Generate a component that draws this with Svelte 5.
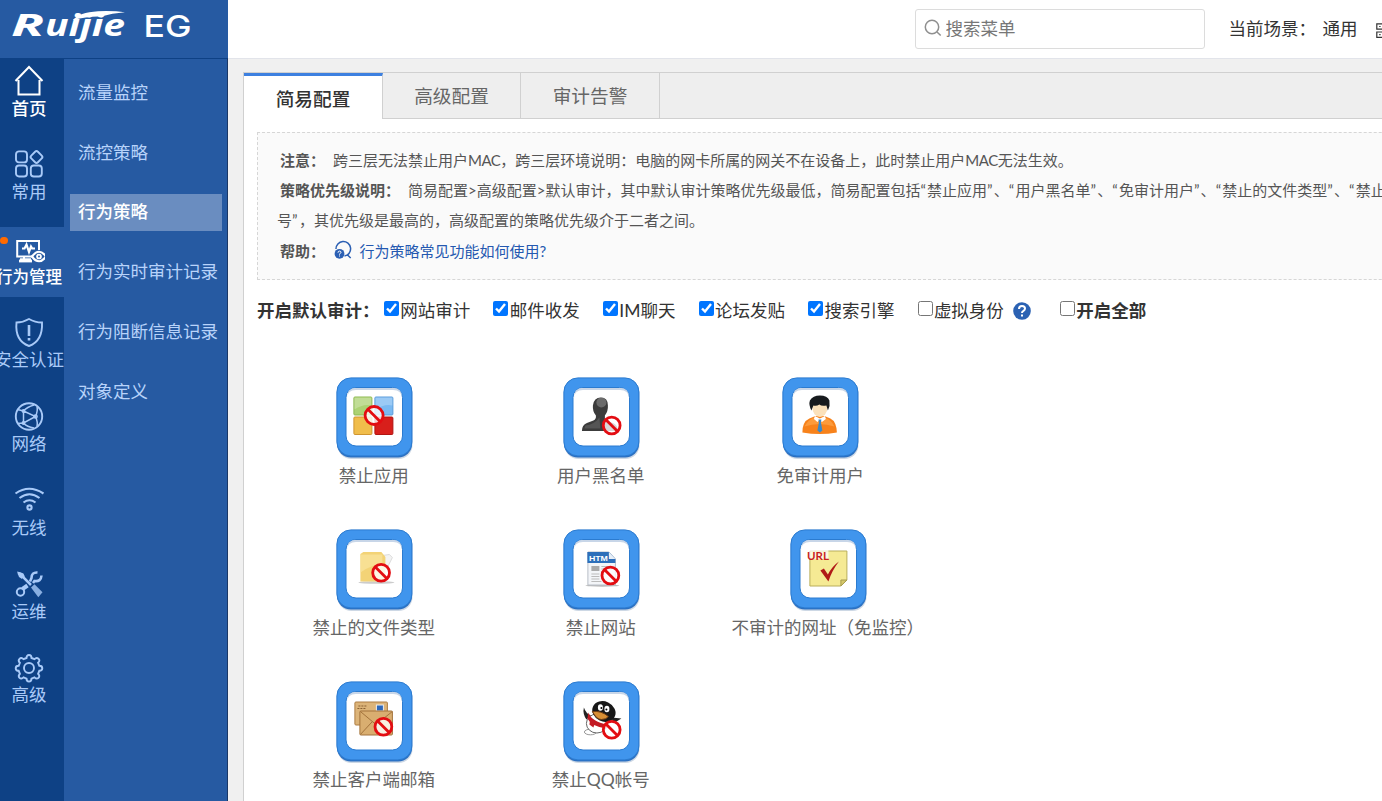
<script>
  const nav = [
    { id: 'home', label: '首页', strong: true },
    { id: 'apps', label: '常用' },
    { id: 'behavior', label: '行为管理', active: true },
    { id: 'shield', label: '安全认证' },
    { id: 'network', label: '网络' },
    { id: 'wifi', label: '无线' },
    { id: 'tools', label: '运维' },
    { id: 'gear', label: '高级' }
  ];
  const submenu = ['流量监控', '流控策略', '行为策略', '行为实时审计记录', '行为阻断信息记录', '对象定义'];
  const tabs = ['简易配置', '高级配置', '审计告警'];
  const audits = [
    { label: '网站审计', on: true },
    { label: '邮件收发', on: true },
    { label: 'IM聊天', on: true },
    { label: '论坛发贴', on: true },
    { label: '搜索引擎', on: true },
    { label: '虚拟身份', on: false, help: true },
    { label: '开启全部', on: false, strong: true }
  ];
  const tiles = [
    { id: 'app', label: '禁止应用', ban: [38.7, 39] },
    { id: 'black', label: '用户黑名单', ban: [49.3, 49] },
    { id: 'free', label: '免审计用户', shift: true },
    { id: 'file', label: '禁止的文件类型', ban: [45.7, 44.3] },
    { id: 'site', label: '禁止网站', ban: [48, 47] },
    { id: 'url', label: '不审计的网址（免监控）' },
    { id: 'mail', label: '禁止客户端邮箱', ban: [48, 46.3] },
    { id: 'qq', label: '禁止QQ帐号', ban: [49.3, 49.3] }
  ];
</script>

<header class="top">
  <div class="brand">
    <svg width="228" height="58" viewBox="0 0 228 58" fill="#fff">
      <text class="ruijie" x="11" y="35.8"><tspan textLength="33" lengthAdjust="spacingAndGlyphs">R</tspan><tspan x="45" textLength="80" lengthAdjust="spacingAndGlyphs">uijie</tspan></text>
      <path d="M73 20Q79 12.500 98 11.200Q114 10.600 125 12.300Q112 13.400 101 16.500Q88 16 73 20Z" />
      <text class="eg" x="143.500" y="37.300" textLength="48" lengthAdjust="spacingAndGlyphs">EG</text>
    </svg>
  </div>
  <div class="bar">
    <div class="search">
      <svg width="18" height="18" viewBox="0 0 18 18" fill="none" stroke="#8f8f8f" stroke-width="1.5">
        <circle cx="8" cy="8" r="6.7" /><path d="M13 13l3.7 3.5" />
      </svg>
      <input placeholder="搜索菜单" />
    </div>
    <span class="scene">当前场景：</span>
    <span class="scene-value">通用</span>
    <svg class="qr" width="16" height="16" viewBox="0 0 16 16" fill="none" stroke="#333" stroke-width="1.2">
      <path d="M.8.8h6v5.4h-6zM.8 9h6v5.4h-6zM9.5.8h5.4v5.4H9.5zM3.2 3.5h1.4M3.2 11.7h1.4" />
    </svg>
  </div>
</header>

<div class="body">
  <nav class="side">
    {#each nav as n}
      <div class="item" class:active={n.active} class:strong={n.strong}>
        {#if n.active}<i class="dot"></i>{/if}
        <svg width="32" height="32" viewBox="0 0 32 32" fill="none" stroke="currentColor" stroke-width="1.9">
          {#if n.id === 'home'}
            <path d="M2.500 17 16 3l13.500 14M5.500 16v14.500h21V16" stroke-width="2" />
          {:else if n.id === 'apps'}
            <rect x="3" y="3.400" width="11" height="11" rx="3" /><rect x="3" y="17.500" width="11" height="11" rx="3" /><rect x="17.800" y="17.500" width="11" height="11" rx="3" />
            <rect x="18.800" y="4.300" width="9.400" height="9.400" rx="2" transform="rotate(45 23.500 9)" />
          {:else if n.id === 'behavior'}
            <g transform="translate(0 2)"><path d="M19 22.500H4.200V7H26v9M7 25.200h11M11 23v3" stroke-width="2" /><path d="M6 27h13" stroke-width="2.800" />
            <path d="M9 14.500h2.500l2-4 2.500 7.500 2-5.500 1.200 2H22" stroke-width="2.200" />
            <path d="M19 22.500q7-9.500 14 0q-7 9.500-14 0z" fill="#265aa2" stroke-width="2.200" /><circle cx="26" cy="22.500" r="1.900" /></g>
          {:else if n.id === 'shield'}
            <path d="M16 3q6 3.500 13 3.500C29.500 17 27 26 16 30C5 26 2.500 17 3.500 6.500Q10 6.500 16 3z" />
            <path d="M16 9v11M16 22v2.500" stroke-width="2.600" />
          {:else if n.id === 'network'}
            <circle cx="16" cy="16.500" r="13.200" />
            <g stroke-width="1.500"><path d="M10.500 11 22.500 16.500 10.500 23zM10.500 11Q14 7 21 5M10.500 11 4.500 9.500M10.500 23l-6 .5M10.500 23Q14 27 21 28M22.500 16.500Q25 11 24 6.500M22.500 16.500Q25 22 24 26.500" />
            <circle cx="10.500" cy="11" r="1.200" /><circle cx="10.500" cy="23" r="1.200" /><circle cx="22.500" cy="16.500" r="1.600" /></g>
          {:else if n.id === 'wifi'}
            <path d="M2.500 9.500Q16 0 30.500 9.500M6.500 14Q16.500 6.500 26.500 14M10.500 18.500Q16.500 14 22.500 18.500" stroke-width="2.100" /><circle cx="16.500" cy="23.500" r="2.100" stroke-width="2.100" />
          {:else if n.id === 'tools'}
            <path d="M5 5l4.500 1.500L11 10l7 7" stroke-width="2.500" /><path d="M4 3.500l5 1.500 2.500 3-2.500 3-3-2z" fill="currentColor" stroke="none" />
            <path d="M18 19.500l3.500-3.300 8 8-4.200 5z" fill="currentColor" stroke="none" opacity=".8" />
            <path d="M24.500 4.500q-6-.5-6 5.500l-1.500 3.500M20 15l1.500-2q6.500 1 7-5.500" stroke-width="2.600" /><path d="M14.500 17.500l-5 3.500" stroke-width="4" /><circle cx="7.500" cy="24" r="3.700" stroke-width="2" />
          {:else}
            <circle cx="16" cy="16" r="5" />
            <path d="M13.500 6q0-3 2.500-3t2.500 3l3 1.200q2-2.200 4-.4t-.4 4l1.200 3q3 0 3 2.500t-3 2.500l-1.200 3q2.200 2.200.4 4t-4-.4l-3 1.200q0 3-2.500 3t-2.500-3l-3-1.200q-2.200 2.200-4 .4t.4-4L5.700 18.800q-3 0-3-2.500t3-2.500l1.200-3q-2.200-2.200-.4-4t4 .4z" />
          {/if}
        </svg>
        <span>{n.label}</span>
      </div>
    {/each}
  </nav>

  <nav class="sub">
    {#each submenu as s, i}
      <div class="entry" class:current={i === 2}>{s}</div>
    {/each}
  </nav>

  <main>
    <div class="panel">
      <div class="tabs">
        {#each tabs as t, i}
          <div class="tab" class:on={i === 0}>{t}</div>
        {/each}
      </div>

      <div class="notes">
        <p class="in"><b class="w1">注意：</b>跨三层无法禁止用户<span class="mac">MAC</span>，跨三层环境说明：电脑的网卡所属的网关不在设备上，此时禁止用户<span class="mac">MAC</span>无法生效。</p>
        <p class="in"><b class="w2">策略优先级说明：</b>简易配置&gt;高级配置&gt;默认审计，其中默认审计策略优先级最低，简易配置包括<q>禁止应用</q>、<q>用户黑名单</q>、<q>免审计用户</q>、<q>禁止的文件类型</q>、<q class="open">禁止QQ帐</q></p>
        <p>号<i class="mark">”</i>，其优先级是最高的，高级配置的策略优先级介于二者之间。</p>
        <p class="in help"><b class="w1">帮助：</b>
          <svg width="19" height="20" viewBox="0 0 19 20" fill="none" stroke="#2b5fb3" stroke-width="1.500">
            <path d="M2 9A7.300 7.300 0 1 1 10.500 16M13 14.500l3.700 3.500" /><circle cx="5.500" cy="13.800" r="4.900" fill="#2b5fb3" stroke="none" />
            <path d="M4 12.700q0-1.600 1.500-1.600t1.500 1.300q0 .8-1.500 1.500v.7M5.500 15.500v1" stroke="#fff" stroke-width="1" />
          </svg>
          <a>行为策略常见功能如何使用?</a></p>
      </div>

      <div class="audit">
        <b class="lead">开启默认审计：</b>
        {#each audits as a}
          <label class:strong={a.strong}>
            <input type="checkbox" checked={a.on} /><span>{a.label}</span>
            {#if a.help}
              <svg width="18" height="18" viewBox="0 0 18 18"><circle cx="9" cy="9" r="8.800" fill="#2b62b3" />
                <path d="M6 7q0-3 3-3t3 2.600q0 1.400-1.500 2.200T9 11M9 12.500v2" fill="none" stroke="#fff" stroke-width="2" /></svg>
            {/if}
          </label>
        {/each}
      </div>

      <div class="grid">
        {#each tiles as t}
          <div class="cell" class:shift={t.shift}>
            <svg width="78" height="84" viewBox="0 0 78 84">
              <rect x="1.500" y="3" width="75" height="79" rx="14" fill="#6f8fb5" opacity=".35" />
              <rect x=".9" y="1.500" width="75.200" height="79" rx="14" fill="#2c6fc0" />
              <rect x=".9" y=".9" width="75" height="78" rx="14" fill="#4095ed" stroke="#2b7bd0" />
              <rect x="10" y="10.500" width="56.500" height="58.500" rx="10" fill="#fff" stroke="#2b7bd0" />
              <path d="M11 21v-1q0-9 9-9h37q9 0 9 9v1q-.5-8-9-8H20q-8.500 0-9 8z" fill="#c8d6e8" />
              <g transform="translate(-.6 -.5)">
              {#if t.id === 'app'}
                <rect x="18.500" y="20.500" width="18" height="18" rx="1" fill="#acd273" stroke="#8db950" /><rect x="39.500" y="20.500" width="18" height="18" rx="1" fill="#7ab9f2" stroke="#5a9cdb" />
                <rect x="18.500" y="40.500" width="18" height="17.500" rx="1" fill="#f0bd4b" stroke="#cf9530" /><rect x="39.500" y="40.500" width="18" height="17.500" rx="1" fill="#d81f1b" stroke="#b11512" />
                <path d="M19 21h17v8q-8-2-17 4zM40 21h17v8q-8-2-17 4z" fill="#fff" opacity=".25" />
              {:else if t.id === 'black'}
                <path d="M19.500 54.500q0-6 5-8l6.500-2.500q3-1.500 2.500-5q-3.500-4-3-10q1-8 8-8t7 8q.3 6-3 10v4l9 4q4 2 4 7.500z" fill="#3c3c3c" />
                <ellipse cx="39" cy="26" rx="5" ry="5" fill="#8a8a8a" opacity=".6" /><path d="M23 49q9-1 14-8l1 11H22z" fill="#666" opacity=".6" />
              {:else if t.id === 'free'}
                <path d="M21 56q0-11 7-14l6-2.500h9l6 2.500q6 3 6.500 14q-17 3-34.500 0z" fill="#f7821b" /><path d="M23 50q4-7 10-9l5 3 5-3q7 2 10 9q-15-5-30 0z" fill="#ffab54" opacity=".6" />
                <path d="M33.500 39.500l5 2.500 5-2.500 1 3-4 3-2-2-2.500 2-3.500-3z" fill="#fff" /><path d="M37 43h3l-.5 3 1.500 8-2.500 2-2.500-2 1.500-8z" fill="#3989ca" />
                <ellipse cx="38.500" cy="31.500" rx="7.500" ry="9" fill="#fbe1ba" />
                <path d="M30 34q-3-6-1.500-10q3-5 10-5q7.500 0 9.500 5q1 5-1.500 10l-1.500-5q-5 1-7-1-3 2-6 1z" fill="#171b1e" />
              {:else if t.id === 'file'}
                <ellipse cx="41" cy="54" rx="18" ry="1.300" fill="#ccc" /><path d="M47 27l7-1 3 3-6 12h-5z" fill="#f3f3f3" stroke="#ddd" />
                <path d="M25 25.500l3-2h18l4 5V53H25z" fill="#f3d376" /><path d="M25 26h22v10q-11 0-22 8z" fill="#fae6a0" opacity=".7" />
              {:else if t.id === 'site'}
                <ellipse cx="40" cy="57" rx="17" ry="1.200" fill="#bbb" /><path d="M25.500 23.500h21l6.500 7V56.500H25.500z" fill="#f3f5f8" stroke="#b7bdc6" />
                <path d="M25 23.500h21.500l6.500 7v4H25z" fill="#2d6fba" /><path d="M46.500 23.500v7H53z" fill="#e7eff8" />
                <text x="26.500" y="32.300" class="htm" textLength="19" lengthAdjust="spacingAndGlyphs">HTM</text>
                <rect x="29" y="37.500" width="8" height="5" fill="#aaa" /><path d="M39 38h11M39 40.500h11M39 43h5M29 45.500h8M29 48h8M29 50.500h8M29 53h10M39 46h3" stroke="#bbb" />
              {:else if t.id === 'url'}
                <path d="M20.500 22.500h37v29l-6 6h-31z" fill="#f5ea94" stroke="#b9ae5b" /><path d="M57.500 51.500h-6v6z" fill="#d6c86a" stroke="#a69b4e" />
                <path d="M18 20h21v10.500H18z" fill="#fff" opacity=".7" /><text x="17.500" y="31" class="url" textLength="22" lengthAdjust="spacingAndGlyphs">URL</text>
                <path d="M31 42l3.500-2 4 6q4-8 11-13q-7 9-10.500 20z" fill="#b01a17" />
              {:else if t.id === 'mail'}
                <rect x="19.500" y="21.500" width="32.500" height="23" rx="1" fill="#dcb479" stroke="#ad7d43" /><path d="M23 25.500h9M22 28h8" stroke="#8a6133" stroke-dasharray="2 1" />
                <rect x="41" y="24.500" width="7" height="6" fill="#2f68b8" stroke="#eee" />
                <rect x="24.500" y="30.500" width="32.500" height="24" rx="1" fill="#d9ae70" stroke="#a3733c" /><path d="M25 31l15.500 13L57 31M25 54l12-13" fill="none" stroke="#a3733c" />
              {:else}
                <ellipse cx="28" cy="51.500" rx="6" ry="2.800" fill="#fff" stroke="#999" /><path d="M24 39q-4-6-2.500-12q2 6 7 8zM49 37l10 1-8 5z" fill="#222" />
                <ellipse cx="34.500" cy="43" rx="10.500" ry="9.500" fill="#fff" stroke="#666" /><ellipse cx="41.500" cy="31" rx="12" ry="10" fill="#181818" transform="rotate(25 41.500 31)" />
                <path d="M26 32q3 9 19 12l-1 4q-15-2-19-10z" fill="#c31a23" /><path d="M28 38l5 3-2 6-4-3z" fill="#c31a23" />
                <ellipse cx="38" cy="27" rx="2.500" ry="3.300" fill="#fff" /><ellipse cx="44.500" cy="28.500" rx="2.500" ry="3.300" fill="#fff" /><circle cx="39" cy="27.500" r="1" /><circle cx="44" cy="29" r="1" />
                <path d="M30 31q9-1 16 5q-2 3-7 3t-9-8z" fill="#d89035" stroke="#6e3c12" />
              {/if}
              {#if t.ban}
                <g fill="none" stroke="#e30d12" stroke-width="2.800"><circle cx={t.ban[0]} cy={t.ban[1]} r={t.id === 'app' ? 9 : 8.4} fill="#fff" fill-opacity=".8" />
                <path d="M{t.ban[0] - 6} {t.ban[1] - 6}l12 12" /></g>
              {/if}
              </g>
            </svg>
            <span>{t.label}</span>
          </div>
        {/each}
      </div>
    </div>
  </main>
</div>

<style>
  :global(body) { overflow: hidden; }
  :global(#app) {
    width: 1382px; height: 801px; overflow: hidden; display: flex; flex-direction: column;
    font: 17.5px/24px Lato, "Noto Sans CJK SC", sans-serif; color: #333; background: #f0f0f0;
  }
  svg { display: block; flex: none; }
  .top { height: 58px; display: flex; flex: none; }
  .brand { width: 228px; background: #265aa2; }
  .ruijie { font: italic 700 31px "Open Sans", sans-serif; }
  .eg { font: 500 30.500px Inter, sans-serif; }
  .bar { flex: 1; display: flex; align-items: center; padding-left: 687px; background: #fff; border-bottom: 1px solid #e2e4ea; white-space: nowrap; height: 58px; }
  .search { width: 290px; height: 40px; flex: none; box-sizing: border-box; border: 1px solid #dcdcdc; border-radius: 3px; display: flex; align-items: center; padding-left: 8px; gap: 4px; }
  .search svg { margin: -2px 0 0 -.5px; }
  .search input { border: 0; outline: 0; padding: 0; width: 220px; font: inherit; background: none; }
  .search input::placeholder { color: #777; }
  .scene { width: 94px; margin-left: 23.500px; flex: none; }
  .scene-value { width: 53px; flex: none; }
  .qr { margin-top: 4px; }

  .body { flex: 1; display: flex; min-height: 0; }
  .side { width: 64px; flex: none; background: #0e4185; border-top: 1px solid #0e4185; display: flex; flex-direction: column; gap: 14px; color: #a9caf8; overflow: hidden; }
  .item { height: 70px; flex: none; width: 58px; padding-right: 6px; display: flex; flex-direction: column; align-items: center; position: relative; }
  .item svg { margin-top: 5px; }
  .item span { white-space: nowrap; line-height: 24px; }
  .item:first-child span, .item:nth-child(3) span { margin-top: 1px; }
  .item:last-child span { margin-top: -1px; }
  .item.strong, .item.active { color: #fff; font-weight: 500; }
  .item.active { background: #265aa2; }
  .item.active span { font-size: 16.5px; }
  .dot { position: absolute; left: 0; top: 10px; width: 8px; height: 7px; border-radius: 4px; background: #ff6a00; }
  .sub { width: 151px; flex: none; padding: 15px 6px 0; border-right: 1px solid #1a3766; border-top: 1px solid #0e4185; background: #265aa2; display: flex; flex-direction: column; gap: 23px; color: #b8d3fa; }
  .entry { height: 37px; line-height: 37px; width: 144px; padding-left: 8px; white-space: nowrap; }
  .entry:nth-child(n+3) { line-height: 35px; }
  .entry.current { background: #6a8dc0; color: #fff; font-weight: 500; }

  main { flex: 1; min-width: 0; padding: 14px 0 0 15px; overflow: hidden; }
  .panel { height: 729px; border-left: 1px solid #d0d0d0; background: #fff; overflow: hidden; }
  .tabs { height: 47px; box-sizing: border-box; background: #eee; border-top: 1px solid #d0d0d0; box-shadow: inset 0 -1px #d0d0d0; display: flex; }
  .tab { width: 138px; box-sizing: border-box; border-right: 1px solid #d0d0d0; text-align: center; font-size: 18.670px; line-height: 46px; color: #666; }
  .tab:last-child { width: 139px; }
  .tab.on { width: 139px; background: #fff; border-top: 3px solid #3d80e0; color: #333; font-weight: 500; line-height: 46px; }
  .notes { width: 1300px; height: 148px; box-sizing: border-box; margin: 13px 0 0 13px; border: 1px dashed #d6d6d6; background: #fafafa; padding: 12px 0 0 19px; font-size: 15px; color: #555; white-space: nowrap; }
  p { margin: 0; height: 30px; line-height: 30px; }
  .in { padding-left: 3px; }
  .in b { display: inline-block; }
  b { font-weight: 700; }
  .w1 { width: 53px; }
  .w2 { width: 128px; }
  .mac { letter-spacing: -.5px; }
  q { quotes: none; }
  q::before { content: "“"; letter-spacing: 1.200px; }
  q::after { content: "”"; letter-spacing: 1.200px; }
  q.open::after { content: none; }
  .mark { font-style: normal; letter-spacing: 1.500px; }
  .help { display: flex; align-items: center; margin-top: 1px; }
  .help svg { margin: -3px 7px 0 .5px; }
  a { color: #2458b0; }
  .audit { display: flex; align-items: center; height: 24px; margin: 18px 0 0 13px; white-space: nowrap; }
  .lead { width: 127px; flex: none; margin-top: 1px; }
  label { display: flex; align-items: center; margin-right: 23.200px; }
  label span { margin-top: 1px; }
  label svg { margin: 1px 6px 0 9px; }
  label.strong { font-weight: 700; }
  label input { width: 15px; height: 15px; margin: -3.500px 1.300px 0 0; }
  .grid { display: grid; grid-template-columns: repeat(3, 227px); grid-auto-rows: 152px; margin: 55px 0 0 17px; }
  .cell { display: flex; flex-direction: column; align-items: center; color: #666; white-space: nowrap; }
  .cell span { line-height: 24px; margin-top: 3px; padding-right: 1.500px; }
  .cell.shift { margin-right: 15px; }
  .htm { font: 700 8px "Liberation Sans", sans-serif; fill: #fff; }
  .url { font: 700 10.500px Lato, sans-serif; fill: #c81e1e; }
</style>
